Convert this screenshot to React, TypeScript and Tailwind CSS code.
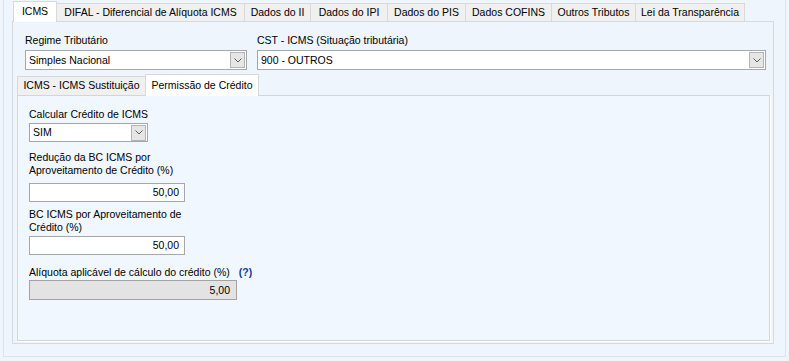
import React from 'react';

const tabs = [
  { label: 'ICMS', w: 'w-[44px]' },
  { label: 'DIFAL - Diferencial de Alíquota ICMS', w: 'w-[188px]' },
  { label: 'Dados do II', w: 'w-[66px]' },
  { label: 'Dados do IPI', w: 'w-[77px]' },
  { label: 'Dados do PIS', w: 'w-[78px]' },
  { label: 'Dados COFINS', w: 'w-[86px]' },
  { label: 'Outros Tributos', w: 'w-[84px]' },
  { label: 'Lei da Transparência', w: 'w-[109px]' },
];

function Chevron() {
  return (
    <svg width="8" height="5" viewBox="0 0 8 5">
      <path d="M0.5 0.5 L4 4 L7.5 0.5" fill="none" stroke="#5a5a5a" strokeWidth="1" />
    </svg>
  );
}

function Combo({ value, className }: { value: string; className: string }) {
  return (
    <div className={`flex items-center border border-[#a7a7a7] bg-white pl-[3px] pr-[1px] ${className}`}>
      <span className="flex-1 truncate leading-[13px]">{value}</span>
      <span className="flex h-[16px] w-[15px] items-center justify-center border border-[#b4b4b4] bg-[#e6e6e6]">
        <Chevron />
      </span>
    </div>
  );
}

function NumberBox({ value, disabled, className }: { value: string; disabled?: boolean; className: string }) {
  return (
    <div
      className={`flex items-center justify-end border pr-[5px] leading-[13px] ${
        disabled ? 'border-[#a3a3a3] bg-[#e3e3e3]' : 'border-[#a7a7a7] bg-white'
      } ${className}`}
    >
      {value}
    </div>
  );
}

export default function App() {
  return (
    <div className="h-[362px] w-[789px] border-b border-[#d4d4d4] bg-[#eef5fd] font-['Liberation_Sans',Arial,sans-serif] text-[10.5px] text-black">
      <div className="ml-[3px] h-[357px] w-[783px] border-x border-b border-[#dbe3ec] pl-[8px] pt-[1px]">
        {/* Main tab strip */}
        <div className="flex h-[20px] items-end pl-[1px]">
          {tabs.map((t, i) =>
            i === 0 ? (
              <div
                key={t.label}
                className={`relative z-10 -mb-px flex h-[21px] items-center justify-center border-x border-t border-[#d9d9d9] bg-white ${t.w}`}
              >
                {t.label}
              </div>
            ) : (
              <div
                key={t.label}
                className={`flex h-[18px] items-center justify-center border-r border-t border-[#d9d9d9] bg-[#f0f0f0] ${t.w}`}
              >
                {t.label}
              </div>
            )
          )}
        </div>

        {/* Main tab panel */}
        <div className="flex h-[323px] w-[762px] flex-col border border-[#d9d9d9] bg-[#eef5fd]">
          <div className="flex gap-[10px] pl-[12px] pr-[7px] pt-[12px]">
            <div className="w-[222px]">
              <div className="h-[13px] leading-[13px]">Regime Tributário</div>
              <Combo value="Simples Nacional" className="mt-[3px] h-[20px]" />
            </div>
            <div className="flex-1">
              <div className="h-[13px] leading-[13px]">CST - ICMS (Situação tributária)</div>
              <Combo value="900 - OUTROS" className="mt-[3px] h-[20px]" />
            </div>
          </div>

          {/* Sub tab strip */}
          <div className="ml-[4px] mr-[3px] mt-[4px] flex h-[21px] items-end">
            <div className="flex h-[19px] w-[128px] items-center justify-center border-l border-t border-[#d9d9d9] bg-[#f0f0f0]">
              ICMS - ICMS Sustituição
            </div>
            <div className="relative z-10 -mb-px flex h-[22px] w-[114px] items-center justify-center border-x border-t border-[#d9d9d9] bg-white">
              Permissão de Crédito
            </div>
          </div>

          {/* Sub tab panel */}
          <div className="mb-[2px] ml-[4px] mr-[3px] flex-1 border border-[#d5d5d5] bg-[#f0f7ff] pl-[11px] shadow-[1px_1px_0_#ffffff]">
            <div className="mt-[12px] leading-[13px]">Calcular Crédito de ICMS</div>
            <Combo value="SIM" className="mt-[2px] h-[19px] w-[119px]" />

            <div className="mt-[9px] w-[170px] leading-[13px]">
              Redução da BC ICMS por
              <br />
              Aproveitamento de Crédito (%)
            </div>
            <NumberBox value="50,00" className="mt-[6px] h-[19px] w-[156px]" />

            <div className="mt-[6px] leading-[13px]">
              BC ICMS por Aproveitamento de
              <br />
              Crédito (%)
            </div>
            <NumberBox value="50,00" className="mt-[2px] h-[19px] w-[156px]" />

            <div className="mt-[11px] flex leading-[13px]">
              <span>Alíquota aplicável de cálculo do crédito (%)</span>
              <span className="ml-[9px] font-bold text-[#1637a6]">(?)</span>
            </div>
            <NumberBox value="5,00" disabled className="mt-[1px] h-[20px] w-[208px] pr-[6px]" />
          </div>
        </div>
      </div>
    </div>
  );
}
